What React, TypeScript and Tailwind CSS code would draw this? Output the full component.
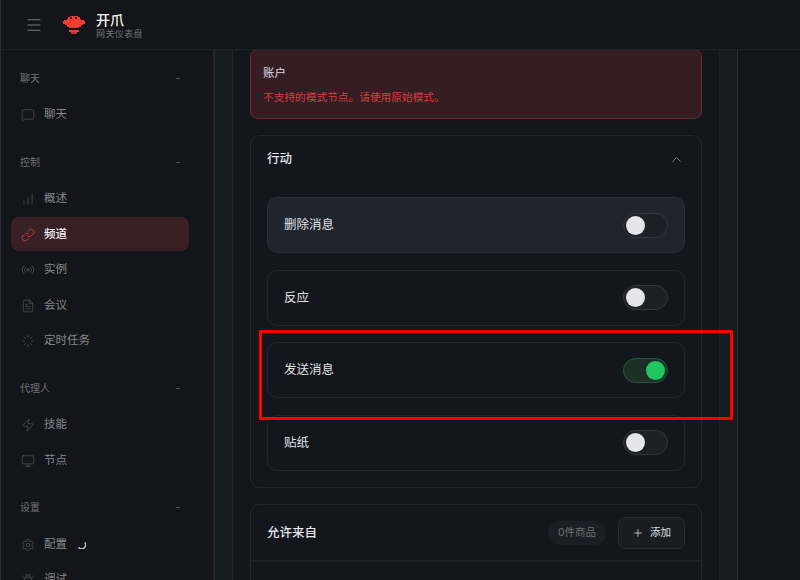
import { BarChart, Bug, ChevronUp, FileText, Link, Loader, Menu, MessageSquare, Monitor, Plus, Radio, Settings, Zap } from 'lucide-react';

const FONT = "font-['Inter','Noto_Sans_CJK_SC',sans-serif]";

const groups = [
  { title: '聊天', items: [{ label: '聊天', icon: MessageSquare }] },
  {
    title: '控制',
    items: [
      { label: '概述', icon: BarChart },
      { label: '频道', icon: Link, active: true },
      { label: '实例', icon: Radio },
      { label: '会议', icon: FileText },
      { label: '定时任务', icon: Loader },
    ],
  },
  {
    title: '代理人',
    items: [
      { label: '技能', icon: Zap },
      { label: '节点', icon: Monitor },
    ],
  },
  {
    title: '设置',
    items: [
      { label: '配置', icon: Settings, spin: true },
      { label: '调试', icon: Bug },
    ],
  },
];

function Logo() {
  return (
    <svg width="22" height="18" viewBox="0 0 22 18" shapeRendering="crispEdges" className="shrink-0">
      <rect x="7" y="0" width="8" height="1" fill="#e8392c" />
      <rect x="5" y="1" width="12" height="2" fill="#f03e30" />
      <rect x="4" y="3" width="14" height="1" fill="#f03e30" />
      <rect x="1" y="4" width="20" height="1" fill="#e8392c" />
      <rect x="0" y="5" width="22" height="3" fill="#f03e30" />
      <rect x="2" y="8" width="18" height="1" fill="#e8392c" />
      <rect x="4" y="9" width="14" height="2" fill="#f03e30" />
      <rect x="6" y="11" width="10" height="1" fill="#d8352a" />
      <rect x="7" y="1" width="2" height="2" fill="#3a1412" />
      <rect x="12" y="1" width="2" height="2" fill="#3a1412" />
      <rect x="6" y="14" width="10" height="2" fill="#f03e30" />
      <rect x="8" y="16" width="6" height="2" fill="#c9302a" />
    </svg>
  );
}

function Toggle({ on }: { on?: boolean }) {
  return (
    <div
      className={`w-[45px] h-[25px] rounded-full border flex items-center px-[2px] ${
        on ? 'bg-[#1c3027] border-[#245a3b] justify-end' : 'bg-[#1d2027] border-[#34373e] justify-start'
      }`}
    >
      <div className={`w-[19px] h-[19px] rounded-full ${on ? 'bg-[#22c55e]' : 'bg-[#e6e6ea]'}`} />
    </div>
  );
}

function ActionRow({ label, on, hover }: { label: string; on?: boolean; hover?: boolean }) {
  return (
    <div
      className={`h-[56px] rounded-[10px] border flex items-center justify-between pl-4 pr-4 ${
        hover ? 'bg-[#20242d] border-[#2c2f37]' : 'border-[#23262c]'
      }`}
    >
      <span className="pt-[1px] text-[12.5px] text-[#e2e3e6]">{label}</span>
      <Toggle on={on} />
    </div>
  );
}

export default function App() {
  return (
    <div className={`relative h-[580px] w-[800px] overflow-hidden flex flex-col bg-[#14151a] ${FONT}`}>
      <header className="h-[50px] shrink-0 flex items-center border-b border-[#1e2025] border-l border-l-[#2a2c31] bg-[#14151a]">
        <div className="w-[62px] pl-[24px]">
          <Menu size={18} strokeWidth={1.1} className="text-[#8b8d93]" />
        </div>
        <Logo />
        <div className="ml-[11px] pt-[2px] flex flex-col">
          <span className="text-[14px] leading-[15px] font-medium text-[#f4f4f5]">开爪</span>
          <span className="text-[9px] leading-[13px] tracking-[0.4px] text-[#6f7279]">网关仪表盘</span>
        </div>
      </header>

      <div className="flex flex-1 min-h-0">
        <aside className="w-[215px] shrink-0 border-l border-l-[#2a2c31] border-r-2 border-r-[#25272c] pl-[10px] pr-[24px] pt-[18px] overflow-hidden">
          {groups.map(group => (
            <div key={group.title} className="mb-[21px]">
              <div className="flex items-center justify-between h-[20px] px-[9px] mb-[9px]">
                <span className="text-[10px] text-[#6f7279]">{group.title}</span>
                <div className="w-[4px] h-px bg-[#4f5157]" />
              </div>
              <div className="flex flex-col gap-[1.5px]">
                {group.items.map(item => {
                  const Icon = item.icon;
                  return (
                    <div
                      key={item.label}
                      className={`h-[34px] pt-[2px] rounded-[8px] flex items-center gap-[9px] pl-[10px] ${
                        item.active ? 'bg-[#382025]' : ''
                      }`}
                    >
                      <Icon
                        size={14}
                        strokeWidth={item.active ? 1.25 : 1}
                        className={item.active ? 'text-[#ef4450]' : 'text-[#62646a]'}
                      />
                      <span className={`text-[11.5px] ${item.active ? 'text-[#f2f2f3] font-medium' : 'text-[#85878d]'}`}>
                        {item.label}
                      </span>
                      {item.spin && (
                        <svg width="9" height="9" viewBox="0 0 9 9" fill="none" className="ml-[1px]">
                          <path d="M7.8 2.5A3.8 3.8 0 0 1 1.5 7.4" stroke="#c9ced6" strokeWidth="1.3" />
                        </svg>
                      )}
                    </div>
                  );
                })}
              </div>
            </div>
          ))}
        </aside>

        <div className="w-[18px] shrink-0 bg-[#171b22] border-r border-[#23262c]" />

        <main className="w-[486px] shrink-0 bg-[#13161c] px-[17px] flex flex-col gap-4 overflow-hidden">
          <section className="h-[70px] shrink-0 -mt-px rounded-[8px] border border-[#6b2a30] bg-[#341e24] px-[12px] pt-[15px]">
            <p className="text-[11.5px] leading-[16px] text-[#dcdde0]">账户</p>
            <p className="mt-[9px] text-[10.7px] leading-[16px] text-[#dc3a40]">不支持的模式节点。请使用原始模式。</p>
          </section>

          <section className="shrink-0 h-[353px] rounded-[10px] border border-[#23262c]">
            <div className="h-[46px] flex items-center justify-between pl-[16px] pr-[17px]">
              <span className="pt-[1px] text-[12.5px] font-medium text-[#e7e8ea]">行动</span>
              <ChevronUp size={15} strokeWidth={1.5} className="text-[#7c7e85]" />
            </div>
            <div className="mt-[15px] mx-4 flex flex-col gap-[16.5px]">
              <ActionRow label="删除消息" hover />
              <ActionRow label="反应" />
              <ActionRow label="发送消息" on />
              <ActionRow label="贴纸" />
            </div>
          </section>

          <section className="shrink-0 rounded-[10px] border border-[#23262c] h-[120px]">
            <div className="h-[57px] border-b-2 border-[#1e2026] flex items-center pl-[16px] pr-4">
              <span className="pt-[2px] text-[12.5px] font-medium text-[#e7e8ea]">允许来自</span>
              <span className="ml-auto h-[24px] px-[10px] rounded-full bg-[#1b1e25] flex items-center text-[10.5px] text-[#6b6e75]">
                0件商品
              </span>
              <button className="ml-[12px] h-[32px] w-[67px] rounded-[7px] border border-[#2a2d33] bg-[#1a1c22] flex items-center justify-center gap-[6px] text-[10.5px] text-[#dfe0e3]">
                <Plus size={12} strokeWidth={1.5} />
                添加
              </button>
            </div>
          </section>
        </main>

        <div className="w-[19px] shrink-0 bg-[#171b22] border-l border-[#1e2127] border-r border-r-[#2a2c31]" />
        <div className="flex-1 bg-[#131519]" />
      </div>

      <div className="absolute left-[259px] top-[330px] w-[474px] h-[90px] border-[3px] border-[#ff0000] pointer-events-none" />
    </div>
  );
}
